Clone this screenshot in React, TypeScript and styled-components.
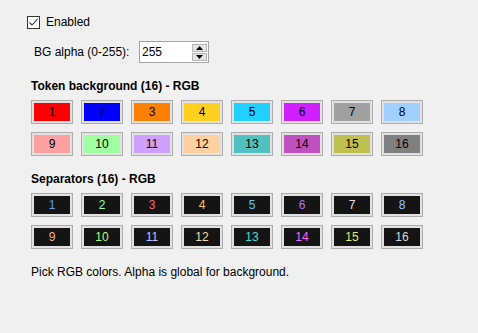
import React, { useState } from 'react';
import styled, { createGlobalStyle } from 'styled-components';

const GlobalStyle = createGlobalStyle`
  body {
    margin: 0;
    background: #f0f0f0;
    font-family: 'Liberation Sans', Arial, sans-serif;
    font-size: 12px;
    color: #000;
  }
`;

const Page = styled.div`
  width: 478px;
  height: 333px;
  box-sizing: border-box;
  padding: 14px 0 0 27px;
  display: flex;
  flex-direction: column;
  line-height: 16px;
`;

const CheckRow = styled.label`
  display: flex;
  align-items: center;
  gap: 6px;
  height: 16px;
  cursor: default;
`;

const CheckBox = styled.span`
  width: 13px;
  height: 13px;
  box-sizing: border-box;
  border: 1px solid #333333;
  background: #ffffff;
  display: flex;
  align-items: center;
  justify-content: center;

  svg {
    width: 11px;
    height: 11px;
  }
`;

const AlphaRow = styled.div`
  display: flex;
  align-items: center;
  margin-top: 11px;
  padding-left: 7px;
  height: 22px;
`;

const AlphaLabel = styled.span`
  width: 105px;
`;

const SpinBox = styled.div`
  width: 70px;
  height: 22px;
  box-sizing: border-box;
  border: 1px solid #a5a5a5;
  background: #ffffff;
  display: flex;
  align-items: center;
  padding: 1px 1px 1px 2px;
`;

const SpinInput = styled.input`
  flex: 1;
  min-width: 0;
  border: none;
  outline: none;
  padding: 0;
  background: transparent;
  font-family: inherit;
  font-size: 12px;
  color: #000;
`;

const SpinButtons = styled.div`
  display: flex;
  flex-direction: column;
  gap: 1px;
  width: 15px;
`;

const SpinButton = styled.button`
  height: 8px;
  padding: 0;
  border: 1px solid #b5b5b5;
  background: #e5e5e5;
  display: flex;
  align-items: center;
  justify-content: center;

  svg {
    width: 7px;
    height: 4px;
  }
`;

const SectionTitle = styled.div`
  margin: 15px 0 6px 4px;
  font-weight: bold;
`;

const SwatchGrid = styled.div`
  display: grid;
  grid-template-columns: repeat(8, 42px);
  column-gap: 8px;
  row-gap: 8px;
  margin-left: 4px;
`;

const Swatch = styled.button`
  width: 42px;
  height: 24px;
  box-sizing: border-box;
  border: 1px solid #adadad;
  background: #e1e1e1;
  padding: 2px;
  display: flex;
`;

const SwatchFill = styled.span<{ $bg: string; $fg: string }>`
  flex: 1;
  background: ${({ $bg }) => $bg};
  color: ${({ $fg }) => $fg};
  display: flex;
  align-items: center;
  justify-content: center;
  font-family: 'Liberation Sans', Arial, sans-serif;
  font-size: 12px;
  line-height: 16px;
`;

const Footer = styled.div`
  margin: 15px 0 0 4px;
`;

const tokenColors = [
  '#ff0000', '#0000ff', '#ff8000', '#ffd020', '#20d0ff', '#d020ff', '#a0a0a0', '#a0d0ff',
  '#ffa0a0', '#a0ffa0', '#d0a0ff', '#ffd0a0', '#50c0c0', '#c050c0', '#c0c050', '#808080',
];

const separatorColors = [
  '#5aa0ff', '#90ff90', '#ff6070', '#ffc050', '#50c8ff', '#b070ff', '#e0e0e0', '#a0c0ff',
  '#ffb080', '#b0ff70', '#c0c0ff', '#ffd8a8', '#40e0d0', '#ff60ff', '#e0f060', '#d8d8d8',
];

const CheckMark = () => (
  <svg viewBox="0 0 11 11" fill="none" stroke="#333" strokeWidth={1.1}>
    <path d="M1.5 5.5 L4 8 L9.5 2" />
  </svg>
);

const Arrow = ({ up }: { up: boolean }) => (
  <svg viewBox="0 0 7 4">
    <path d={up ? 'M0 4 L3.5 0 L7 4 Z' : 'M0 0 L7 0 L3.5 4 Z'} fill="#000" />
  </svg>
);

export default function App() {
  const [alpha, setAlpha] = useState('255');

  return (
    <Page>
      <GlobalStyle />
      <CheckRow>
        <CheckBox>
          <CheckMark />
        </CheckBox>
        Enabled
      </CheckRow>

      <AlphaRow>
        <AlphaLabel>BG alpha (0-255):</AlphaLabel>
        <SpinBox>
          <SpinInput value={alpha} onChange={(e) => setAlpha(e.target.value)} />
          <SpinButtons>
            <SpinButton type="button">
              <Arrow up />
            </SpinButton>
            <SpinButton type="button">
              <Arrow up={false} />
            </SpinButton>
          </SpinButtons>
        </SpinBox>
      </AlphaRow>

      <SectionTitle>Token background (16) - RGB</SectionTitle>
      <SwatchGrid>
        {tokenColors.map((c, i) => (
          <Swatch key={c + i} type="button">
            <SwatchFill $bg={c} $fg="#000">
              {i + 1}
            </SwatchFill>
          </Swatch>
        ))}
      </SwatchGrid>

      <SectionTitle>Separators (16) - RGB</SectionTitle>
      <SwatchGrid>
        {separatorColors.map((c, i) => (
          <Swatch key={c + i} type="button">
            <SwatchFill $bg="#141414" $fg={c}>
              {i + 1}
            </SwatchFill>
          </Swatch>
        ))}
      </SwatchGrid>

      <Footer>Pick RGB colors. Alpha is global for background.</Footer>
    </Page>
  );
}
